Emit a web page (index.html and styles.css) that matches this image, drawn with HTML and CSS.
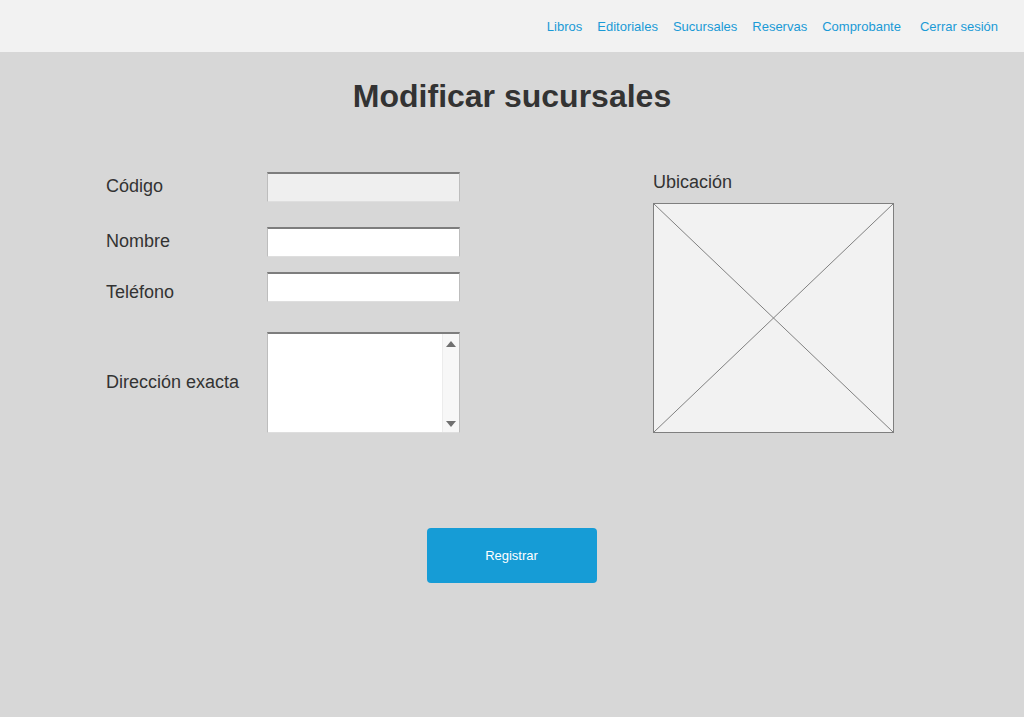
FILE: index.html
```html
<!DOCTYPE html>
<html lang="es">
<head>
<meta charset="utf-8">
<title>Modificar sucursales</title>
<link rel="stylesheet" href="styles.css">
</head>
<body>
<header class="topbar">
  <nav class="nav">
    <a class="nav-link" href="#">Libros</a>
    <a class="nav-link" href="#">Editoriales</a>
    <a class="nav-link" href="#">Sucursales</a>
    <a class="nav-link" href="#">Reservas</a>
    <a class="nav-link" href="#">Comprobante</a>
    <a class="nav-link nav-logout" href="#">Cerrar sesión</a>
  </nav>
</header>
<main class="page">
  <h1 class="title">Modificar sucursales</h1>
  <div class="content">
    <div class="form">
      <div class="row row-code">
        <span class="label">Código</span>
        <div class="field field-disabled"></div>
      </div>
      <div class="row row-name">
        <span class="label">Nombre</span>
        <div class="field"></div>
      </div>
      <div class="row row-phone">
        <span class="label">Teléfono</span>
        <div class="field"></div>
      </div>
      <div class="row row-address">
        <span class="label">Dirección exacta</span>
        <div class="field field-area">
          <div class="area-text"></div>
          <div class="scrollbar">
            <span class="arrow arrow-up"></span>
            <span class="arrow arrow-down"></span>
          </div>
        </div>
      </div>
    </div>
    <div class="map-col">
      <span class="label">Ubicación</span>
      <div class="map">
        <svg class="map-x" viewBox="0 0 239 228" preserveAspectRatio="none" width="239" height="228">
          <line x1="0" y1="0" x2="239" y2="228" stroke="#808080" stroke-width="1"/>
          <line x1="239" y1="0" x2="0" y2="228" stroke="#808080" stroke-width="1"/>
        </svg>
      </div>
    </div>
  </div>
  <div class="actions">
    <button class="btn" type="button">Registrar</button>
  </div>
</main>
</body>
</html>
```

FILE: styles.css
```css
html, body {
  margin: 0;
  padding: 0;
}
body {
  background: #d7d7d7;
  font-family: "Liberation Sans", Arial, sans-serif;
  color: #333333;
  min-height: 717px;
}
.topbar {
  height: 52px;
  background: #f2f2f2;
  display: flex;
  justify-content: flex-end;
  align-items: center;
  padding-right: 26px;
}
.nav {
  display: flex;
  gap: 15px;
}
.nav-link {
  font-size: 13px;
  color: #1a9ad6;
  text-decoration: none;
}
.nav-logout {
  margin-left: 4px;
}
.title {
  margin: 26px 0 0;
  text-align: center;
  font-size: 32px;
  line-height: 37px;
  font-weight: bold;
  color: #333333;
}
.content {
  display: flex;
  align-items: flex-start;
  padding-left: 106px;
  margin-top: 57px;
}
.form {
  width: 354px;
  display: flex;
  flex-direction: column;
}
.row {
  display: flex;
  align-items: center;
}
.row-name { margin-top: 25px; }
.row-phone { margin-top: 15px; }
.row-address { margin-top: 30px; }
.label {
  display: block;
  font-size: 18px;
  line-height: 21px;
  color: #333333;
}
.row .label {
  width: 161px;
  flex: none;
}
.row-code .label,
.row-name .label {
  margin-bottom: 2px;
}
.row-phone .label {
  padding-top: 10px;
  line-height: 20px;
}
.field {
  box-sizing: border-box;
  width: 193px;
  height: 30px;
  background: #ffffff;
  border-top: 2px solid #7d7d7d;
  border-left: 1px solid #bdbdbd;
  border-right: 1px solid #bdbdbd;
  border-bottom: 1px solid #dedede;
}
.field-disabled {
  background: #efefef;
}
.field-area {
  height: 101px;
  display: flex;
}
.area-text {
  flex: 1;
}
.scrollbar {
  width: 16px;
  background: #f7f7f7;
  border-left: 1px solid #ececec;
  position: relative;
}
.arrow {
  position: absolute;
  left: 3px;
  width: 0;
  height: 0;
  border-left: 5px solid transparent;
  border-right: 5px solid transparent;
}
.arrow-up {
  top: 7px;
  border-bottom: 6px solid #707070;
}
.arrow-down {
  bottom: 5px;
  border-top: 6px solid #707070;
}
.map-col {
  margin-left: 193px;
  display: flex;
  flex-direction: column;
}
.map {
  margin-top: 10px;
  width: 241px;
  height: 230px;
  box-sizing: border-box;
  border: 1px solid #7f7f7f;
  background: #f2f2f2;
}
.map-x {
  display: block;
}
.actions {
  display: flex;
  justify-content: center;
  margin-top: 95px;
}
.btn {
  width: 170px;
  height: 55px;
  border: none;
  border-radius: 4px;
  background: #169cd6;
  color: #ffffff;
  font-family: "Liberation Sans", Arial, sans-serif;
  font-size: 13px;
  padding: 0;
  margin-right: 1px;
}
```
